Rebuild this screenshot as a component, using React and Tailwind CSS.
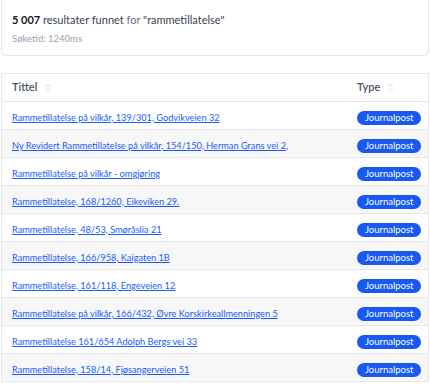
const ROWS = [
  'Rammetillatelse på vilkår, 139/301, Godvikveien 32',
  'Ny Revidert Rammetillatelse på vilkår, 154/150, Herman Grans vei 2,',
  'Rammetillatelse på vilkår - omgjøring',
  'Rammetillatelse, 168/1260, Eikeviken 29.',
  'Rammetillatelse, 48/53, Smøråslia 21',
  'Rammetillatelse, 166/958, Kaigaten 1B',
  'Rammetillatelse, 161/118, Engeveien 12',
  'Rammetillatelse på vilkår, 166/432, Øvre Korskirkeallmenningen 5',
  'Rammetillatelse 161/654 Adolph Bergs vei 33',
  'Rammetillatelse, 158/14, Fjøsangerveien 51',
]

const SortIcon = () => (
  <svg width="6" height="9" viewBox="0 0 6 9" className="ml-2 text-gray-300">
    <path d="M1 3.5 L3 1.5 L5 3.5" fill="none" stroke="currentColor" strokeWidth="1" />
    <path d="M1 5.5 L3 7.5 L5 5.5" fill="none" stroke="currentColor" strokeWidth="1" />
  </svg>
)

export default function App() {
  return (
    <div className="w-[430px] h-[384px] bg-white overflow-hidden" style={{ fontFamily: 'Lato, "Open Sans", sans-serif' }}>
      <div className="mx-px border border-gray-200 rounded-b-md px-[10px] pt-[12px] h-[56px] border-t-0">
        <p className="text-[11px] text-gray-700 leading-4">
          <span className="font-bold text-gray-900">5 007</span> resultater funnet <span className="text-gray-500">for</span> "rammetillatelse"
        </p>
        <p className="text-[9.5px] text-gray-400 mt-[4px]">Søketid: 1240ms</p>
      </div>

      <div className="mt-[17px] mx-px border border-gray-200 border-b-0">
        <div className="flex items-center h-[28px] border-b border-gray-200 text-[11px] font-semibold text-gray-600">
          <div className="flex-1 pl-[10px] flex items-center">Tittel <SortIcon /></div>
          <div className="w-[71px] flex items-center">Type <SortIcon /></div>
        </div>
        {ROWS.map((t, i) => (
          <div key={i} className={`flex items-center h-[28px] pb-[2px] border-b border-gray-200 ${i % 2 ? 'bg-[#f7f7f7]' : 'bg-white'}`}>
            <div className="flex-1 pl-[10px] min-w-0">
              <a href="#" className="text-[9.2px] text-[#1a5bff] underline whitespace-nowrap">{t}</a>
            </div>
            <div className="w-[71px]">
              <span className="inline-block bg-[#1858f4] text-white text-[9.5px] rounded-full px-[8px] leading-[14px]">Journalpost</span>
            </div>
          </div>
        ))}
      </div>
    </div>
  )
}
